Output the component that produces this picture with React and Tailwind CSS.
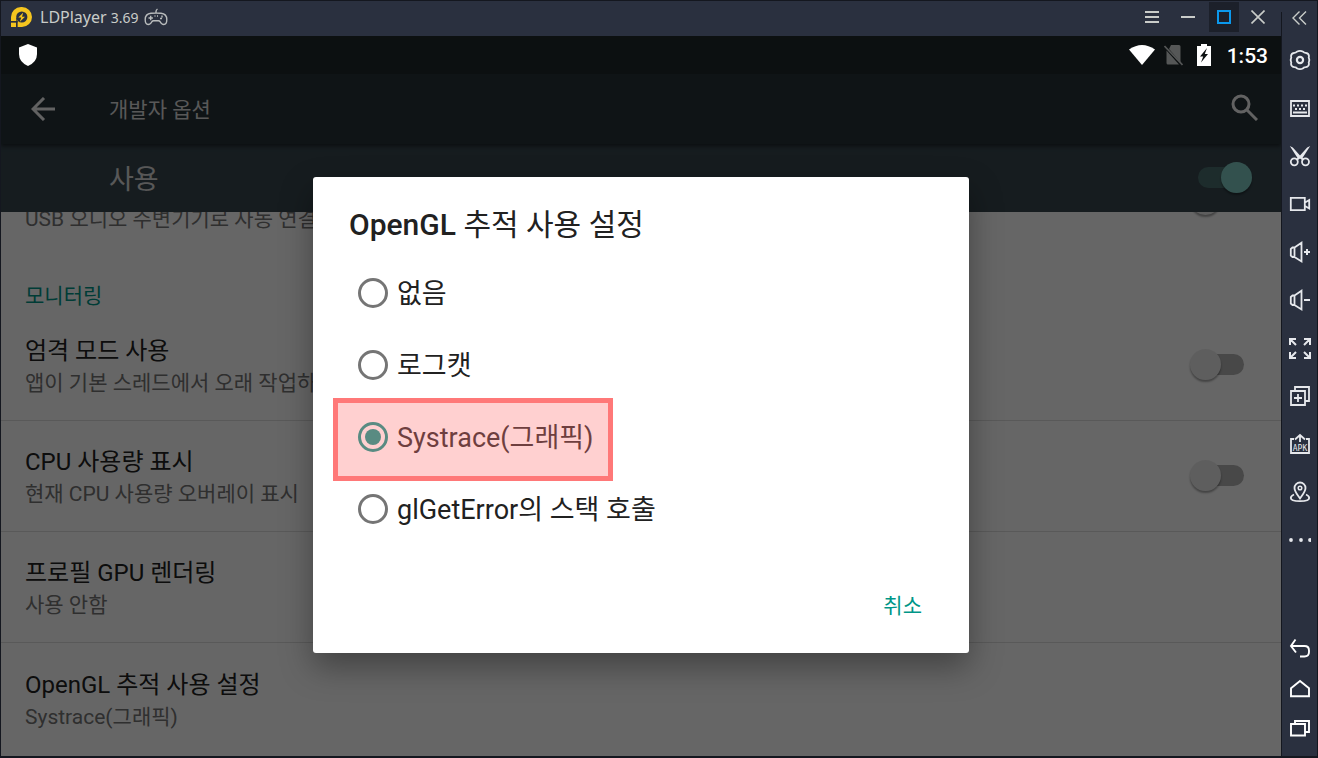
import React, { useState } from 'react';

const SETTINGS = [
  { id: 'usb', summary: 'USB 오디오 주변기기로 자동 연결', hasSwitch: true, border: false },
  { id: 'category', category: '모니터링' },
  { id: 'strict', title: '엄격 모드 사용', summary: '앱이 기본 스레드에서 오래 작업하', hasSwitch: true, border: true },
  { id: 'cpu', title: 'CPU 사용량 표시', summary: '현재 CPU 사용량 오버레이 표시', hasSwitch: true, border: true },
  { id: 'gpu', title: '프로필 GPU 렌더링', summary: '사용 안함', hasSwitch: false, border: true },
  { id: 'opengl', title: 'OpenGL 추적 사용 설정', summary: 'Systrace(그래픽)', hasSwitch: false, border: false }
];

const TRACE_OPTIONS = [
  { value: 'none', label: '없음' },
  { value: 'logcat', label: '로그캣' },
  { value: 'systrace', label: 'Systrace(그래픽)', marked: true },
  { value: 'glerror', label: 'glGetError의 스택 호출' }
];

function ToolIcon({ children }) {
  return (
    <svg className="h-6 w-[23px]" viewBox="0 0 23 24" fill="none" stroke="currentColor" strokeWidth="1.8">
      {children}
    </svg>
  );
}

const SPEAKER = <path d="M6.5 7.5H4.5L2.8 9v6.5l1.7 1.500h2M6.500 7.500l7-4.700v18.600l-7-4.400zM6.500 7.500V17" />;

const TOOLS = [
  {
    name: '설정',
    icon: (
      <>
        <path d="M8.800 3.800Q12 1.800 15.200 3.800Q16 4.800 17.500 4.800Q20.600 5 21 8Q20.400 9.400 21 10.500Q21.700 12 21 13.500Q20.400 14.600 21 16Q20.600 19 17.500 19.200Q16 19.200 15.200 20.200Q12 22.200 8.800 20.200Q8 19.200 6.500 19.200Q3.400 19 3 16Q3.600 14.600 3 13.500Q2.300 12 3 10.500Q3.600 9.400 3 8Q3.400 5 6.500 4.800Q8 4.800 8.800 3.800Z" />
        <circle cx="12" cy="12" r="3.1" strokeWidth="2.2" />
      </>
    )
  },
  {
    name: '키보드',
    icon: (
      <>
        <path d="M3 5h18v15H3z" />
        <path d="M5 9.500h2M9 9.500h2M13 9.500h2M17 9.500h2M7 13h2M11 13h2M15 13h2M5 16.500h14" strokeWidth="2" />
      </>
    )
  },
  {
    name: '스크린샷',
    icon: (
      <>
        <path fill="currentColor" stroke="none" d="M1.800 2l3 1.500L12 11.500 19.200 3.500l3-1.500L13.500 15.500 12 14l-1.500 1.500z" />
        <path d="M12 13l-3.500 3M12 13l3.500 3" />
        <circle cx="6.300" cy="17.800" r="3.500" />
        <circle cx="17.500" cy="17.800" r="3.500" />
      </>
    )
  },
  {
    name: '녹화',
    icon: <path d="M2.800 5.800h14v12.400h-14zM17 10.500L21.200 8v8.500L17 14" />
  },
  {
    name: '볼륨 높이기',
    icon: <>{SPEAKER}<path d="M16 12h6M19 9v6" strokeWidth="2" /></>
  },
  {
    name: '볼륨 낮추기',
    icon: <>{SPEAKER}<path d="M16 12h6" strokeWidth="2" /></>
  },
  {
    name: '전체 화면',
    icon: (
      <path
        d="M2 9V3h6M2.500 3.500L8 9M16 3h6v6M21.500 3.500L16 9M2 16v6h6M2.500 21.500L8 16M22 16v6h-6M21.500 21.500L16 16"
        strokeWidth="2"
      />
    )
  },
  {
    name: '다중 실행',
    icon: <path d="M3 7h14v14H3zM7 7V3h14v14h-4M6 14h8M10 10v8" />
  },
  {
    name: 'APK 설치',
    icon: (
      <>
        <path d="M6 7H3v14h18V7h-3M12 10V3M7 7.500L12 3l5 4.500" />
        <text x="12" y="18.500" textAnchor="middle" fill="currentColor" stroke="none" className="font-['DejaVu_Sans_Mono',monospace] text-[8px]">
          APK
        </text>
      </>
    )
  },
  {
    name: '위치',
    icon: (
      <>
        <path d="M12 18.500C9 14 6.500 11.500 6.500 8a5.500 5.500 0 0 1 11 0c0 3.500-2.500 6-5.500 10.500z" />
        <circle cx="12" cy="8" r="1.800" strokeWidth="1.500" />
        <path d="M6 14.500c-2.300 1-3.200 2.300-3.200 3.500C2.800 20.200 7 21.200 12 21.200s9.200-1 9.200-3.200c0-1.200-.9-2.500-3.200-3.500" />
      </>
    )
  },
  {
    name: '더보기',
    icon: (
      <g fill="currentColor" stroke="none">
        <circle cx="3" cy="12" r="1.900" />
        <circle cx="13" cy="12" r="1.900" />
        <circle cx="22" cy="12" r="1.900" />
      </g>
    )
  }
];

const NAV_KEYS = [
  { name: '뒤로', icon: <path d="M7.500 3.500L3 10l5 6.500M3 10h13.500q4.500 0 4.500 4.500v1.500q0 4.500-4.500 4.500H12" strokeWidth="1.900" /> },
  { name: '홈', icon: <path d="M3 12.200L12 5l9 7.200V20.200H3z" strokeWidth="1.900" /> },
  { name: '최근 앱', icon: <path d="M3 8h14v11.500H3zM7 8V5h14v11h-4" strokeWidth="1.900" /> }
];

function TitleBar() {
  return (
    <header className="flex h-[35px] items-center bg-[#2a303f] pb-[3px] pl-[9px] pr-[7px] text-[#c9ccc9]">
      <svg className="h-[22px] w-[23px]" viewBox="0 0 23 22">
        <path fill="#f5c51f" d="M1 15V11A10 10 0 0 1 11 1h1a10 10 0 0 1 0 20H7.500v-6z" />
        <path fill="#f5c51f" d="M1 16.500h5V21H1z" />
        <circle cx="11.800" cy="11" r="5.600" fill="#2a303f" />
        <path stroke="#2a303f" strokeWidth="1" d="M6.800 12v9M1 15.800h7" />
        <path fill="#f5c51f" d="M13.300 6.500l-5 5h3l-1.600 4.500 5.300-5.300h-3z" />
      </svg>
      <h1 className="ml-[7px] flex items-baseline gap-1 font-['Noto_Sans',sans-serif] text-[16px]">
        LDPlayer <span className="text-[14px]">3.69</span>
      </h1>
      <svg className="ml-[6px] h-[18px] w-6" viewBox="0 0 24 18" fill="none" stroke="#b9bcbd" strokeWidth="1.400">
        <path d="M12 5.500V3.500q0-1.500 1.500-2.500M7 5.300Q12 4.800 17 5.300Q22.800 6 22.800 11.500Q22.800 16.500 19.800 16.500Q17.500 16.500 16 13.500Q15.500 12.800 14.500 12.800h-5Q8.500 12.800 8 13.500Q6.500 16.500 4.200 16.500Q1.200 16.500 1.200 11.500Q1.200 6 7 5.300z" />
        <path d="M4.500 10h4.400M6.700 7.800v4.400M18 7.500v2M16 10.500h2" />
        <path d="M10.500 8h1M13 8h1" />
      </svg>
      <div className="ml-auto flex">
        <button type="button" aria-label="메뉴" className="flex h-[30px] w-9 items-center justify-center">
          <svg className="size-[14px]" viewBox="0 0 14 14" stroke="currentColor" strokeWidth="2"><path d="M0 2h14M0 7h14M0 12h14" /></svg>
        </button>
        <button type="button" aria-label="최소화" className="flex h-[30px] w-9 items-center justify-center">
          <svg className="size-[14px]" viewBox="0 0 14 14" stroke="currentColor" strokeWidth="2"><path d="M0 7h14" /></svg>
        </button>
        <button type="button" aria-label="최대화" className="mx-[3px] flex h-[30px] w-[30px] items-center justify-center bg-[#1c202a]">
          <svg className="size-[14px]" viewBox="0 0 14 14" fill="none" stroke="#0b98ec" strokeWidth="2"><path d="M1 1h12v12H1z" /></svg>
        </button>
        <button type="button" aria-label="닫기" className="flex h-[30px] w-8 items-center justify-center">
          <svg className="size-[14px]" viewBox="0 0 14 14" stroke="currentColor" strokeWidth="1.600"><path d="M.5.5l13 13M13.500.5l-13 13" /></svg>
        </button>
      </div>
    </header>
  );
}

function StatusBar() {
  return (
    <div className="flex h-[38px] shrink-0 items-center bg-[#0c1011] pl-[18px] pr-[13px] text-white">
      <svg className="h-[22px] w-[18px]" viewBox="0 0 18 22" fill="currentColor">
        <path d="M9 0l9 3.500V10q0 8-9 12Q0 18 0 10V3.500z" />
      </svg>
      <div className="ml-auto flex items-center">
        <svg className="h-5 w-[26px]" viewBox="0 0 26 20" fill="currentColor"><path d="M13 20L0 4.500Q13-4.500 26 4.500z" /></svg>
        <svg className="ml-[9px] h-[22px] w-[19px]" viewBox="0 0 19 22">
          <path fill="#555757" d="M7 1h8q1.500 0 1.500 1.500v16L5 5zM2.500 6.500L15 20.500H4q-1.500 0-1.500-1.500z" />
          <path stroke="#555757" strokeWidth="1.600" d="M.5 2l18 19" />
        </svg>
        <svg className="ml-[14px] h-[22px] w-[14px]" viewBox="0 0 14 22">
          <path fill="currentColor" d="M4 0h6v2h4v20H0V2h4z" />
          <path fill="#0c1011" d="M10 4L3 12.500h3.200L4 18.500l7-8.500H7.800z" />
        </svg>
        <time className="ml-4 pt-[3px] text-[21px] font-medium">1:53</time>
      </div>
    </div>
  );
}

function Switch({ label, checked, onChange }) {
  return (
    <input
      type="checkbox"
      role="switch"
      aria-label={label}
      checked={checked}
      onChange={onChange}
      className="relative h-[21px] w-[52px] shrink-0 appearance-none rounded-full bg-[#b3b3b3] before:absolute before:-top-[5px] before:-left-[2px] before:size-[31px] before:rounded-full before:bg-[#ececec] before:shadow-[0_2px_2px_rgba(0,0,0,0.35)] checked:bg-[#4a6f6e] checked:before:left-[23px] checked:before:bg-[#80cbc4]"
    />
  );
}

function SettingRow({ item, checked, onToggle }) {
  if (item.category) {
    return <h3 className="flex h-[54px] shrink-0 items-end px-6 text-[21px] leading-7 text-[#009688]">{item.category}</h3>;
  }
  return (
    <div className={`flex h-[111px] shrink-0 items-center justify-between pb-[2px] pl-6 pr-[37px] ${item.border ? 'border-b border-[#dedede]' : ''}`}>
      <div className="pt-[6px]">
        <p className="min-h-8 text-[24px] leading-8 text-[#212121]">{item.title}</p>
        <p className="text-[21px] leading-8 text-[#757575]">{item.summary}</p>
      </div>
      {item.hasSwitch && <Switch label={item.title || item.summary} checked={checked} onChange={onToggle} />}
    </div>
  );
}

function TraceDialog({ value, onSelect, onClose }) {
  return (
    <div className="absolute inset-0 z-10 flex items-center justify-center bg-black/60">
      <div role="dialog" aria-labelledby="trace-title" className="w-[656px] rounded-[3px] bg-white pb-3 shadow-[0_14px_32px_rgba(0,0,0,0.35)]">
        <h2 id="trace-title" className="px-9 pt-[26px] pb-[10px] text-[30px] leading-[44px] text-[#212121]">
          <span className="font-medium">OpenGL</span> 추적 사용 설정
        </h2>
        <div role="radiogroup" aria-labelledby="trace-title" className="px-5">
          {TRACE_OPTIONS.map((option) => (
            <label key={option.value} className="relative flex h-[72px] w-fit items-center gap-[9px] pr-[19px] pl-[25px] text-[27px] text-[#212121]">
              <input
                type="radio"
                name="trace"
                value={option.value}
                checked={value === option.value}
                onChange={() => onSelect(option.value)}
                className="flex size-[30px] appearance-none items-center justify-center rounded-full border-[3px] border-[#757575] checked:border-[#009688] checked:before:size-4 checked:before:rounded-full checked:before:bg-[#009688]"
              />
              <span className="pt-[3px]">{option.label}</span>
              {option.marked && (
                <span className="pointer-events-none absolute inset-x-0 -top-[3px] h-[83px] border-[5px] border-[#ff7878] bg-[#ff7878]/35" />
              )}
            </label>
          ))}
        </div>
        <div className="mt-6 flex h-[72px] items-center justify-end px-9">
          <button type="button" className="px-[11px] pt-1 text-[21px] text-[#009688]" onClick={onClose}>취소</button>
        </div>
      </div>
    </div>
  );
}

function App() {
  const [dialogOpen, setDialogOpen] = useState(true);
  const [trace, setTrace] = useState('systrace');
  const [enabled, setEnabled] = useState({ master: true });

  const toggle = (id) => setEnabled((prev) => ({ ...prev, [id]: !prev[id] }));

  return (
    <div className="flex h-screen bg-[#14171f] px-px pt-px pb-[2px] font-[Roboto,'Noto_Sans_CJK_KR',sans-serif]">
      <div className="flex min-w-0 flex-1 flex-col">
        <TitleBar />
        <StatusBar />
        <main className="relative flex min-h-0 flex-1 flex-col overflow-hidden bg-white">
          <div className="z-[1] flex h-[70px] shrink-0 items-center bg-[#263238] pl-[30px] pr-[23px] text-[#f5f5f5] shadow-[0_2px_4px_rgba(0,0,0,0.5)]">
            <button type="button" aria-label="뒤로">
              <svg className="size-6" viewBox="0 0 24 24" fill="none" stroke="currentColor" strokeWidth="3"><path d="M24 12H2M13 1L2 12l11 11" /></svg>
            </button>
            <h2 className="ml-[54px] pt-[3px] text-[21px] text-[#dddddd]">개발자 옵션</h2>
            <button type="button" aria-label="검색" className="ml-auto pb-[3px]">
              <svg className="size-[27px]" viewBox="0 0 27 27" fill="none" stroke="currentColor" strokeWidth="3"><circle cx="10" cy="10" r="8" /><path d="M15.500 15.500L26 26" /></svg>
            </button>
          </div>
          <div className="flex h-[68px] shrink-0 items-center justify-between bg-[#37474f] pb-[2px] pl-[108px] pr-[31px] text-[27px] text-[#dddddd]">
            <span className="pt-[6px]">사용</span>
            <Switch label="사용" checked={enabled.master} onChange={() => toggle('master')} />
          </div>
          <div className="flex min-h-0 flex-1 flex-col justify-end overflow-hidden pb-[2px]">
            {SETTINGS.map((item) => (
              <SettingRow key={item.id} item={item} checked={!!enabled[item.id]} onToggle={() => toggle(item.id)} />
            ))}
          </div>
          {dialogOpen && <TraceDialog value={trace} onSelect={setTrace} onClose={() => setDialogOpen(false)} />}
        </main>
      </div>

      {/* 오른쪽 도구 모음 */}
      <aside className="flex w-9 shrink-0 flex-col bg-[#2a303f] pt-[11px] text-[#e6e8ec]">
        <nav className="flex flex-1 flex-col items-stretch border-l border-[#14171f] pb-2">
          <button type="button" aria-label="접기" className="mb-3 flex h-3 items-center justify-center text-[#c9ccc9]">
            <svg className="h-[14px] w-[15px]" viewBox="0 0 15 14" fill="none" stroke="currentColor" strokeWidth="1.400"><path d="M7.500.5L1 7l6.500 6.500M14 .5L7.500 7l6.500 6.500" /></svg>
          </button>
          {TOOLS.map((tool) => (
            <button key={tool.name} type="button" aria-label={tool.name} className="flex h-12 items-center justify-center">
              <ToolIcon>{tool.icon}</ToolIcon>
            </button>
          ))}
          <div className="mt-auto flex flex-col text-white">
            {NAV_KEYS.map((key) => (
              <button key={key.name} type="button" aria-label={key.name} className="flex h-10 items-center justify-center">
                <ToolIcon>{key.icon}</ToolIcon>
              </button>
            ))}
          </div>
        </nav>
      </aside>
    </div>
  );
}

export default App;
